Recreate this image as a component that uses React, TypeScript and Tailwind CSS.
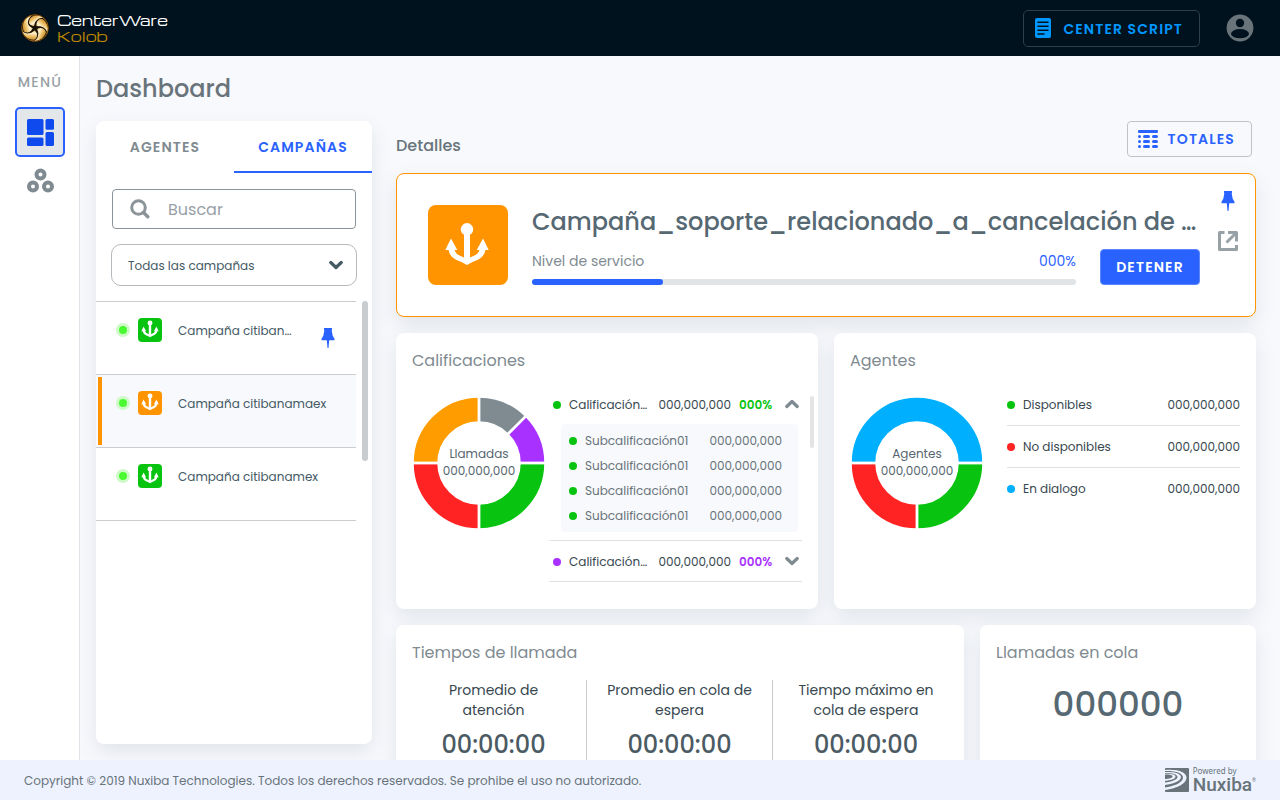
import React, { useState } from "react";

const card = "rounded-lg bg-white shadow-[0_8px_20px_rgba(69,90,100,0.13)]";

function BrandMark() {
  return (
    <svg viewBox="0 0 28 28" className="size-7 shrink-0" aria-hidden="true">
      <defs>
        <linearGradient id="gold" x1="0" y1="0" x2="1" y2="1">
          <stop offset="0" stopColor="#a8690f" />
          <stop offset="0.3" stopColor="#e9b95c" />
          <stop offset="0.5" stopColor="#fff3cf" />
          <stop offset="0.75" stopColor="#dc9f38" />
          <stop offset="1" stopColor="#8d5510" />
        </linearGradient>
      </defs>
      <circle cx="14" cy="14" r="13.6" fill="#170f06" />
      {[0, 72, 144, 216, 288].map((angle) => (
        <path
          key={angle}
          d="M13 12.500C8.500 12 5.500 8.500 7 4C10 1 18 -1 23 4C24.500 5.500 25.500 7 25.800 8.500C22 4.800 16.500 5 14.800 8C13.800 10 14 11.200 13 12.500Z"
          fill="url(#gold)"
          stroke="#170f06"
          strokeWidth="1"
          transform={`rotate(${angle} 14 14)`}
        />
      ))}
      <circle cx="14" cy="14" r="13.3" fill="none" stroke="#a8690f" strokeWidth="0.800" />
    </svg>
  );
}

function ScriptIcon() {
  return (
    <svg viewBox="0 0 16 20" className="h-5 w-4" aria-hidden="true">
      <rect width="16" height="20" rx="2" fill="#0098ff" />
      <path d="M3 4.300H13M3 8.300H13M3 12.300H13M3 16H9" stroke="#00121d" strokeWidth="1.600" strokeLinecap="round" />
    </svg>
  );
}

function AccountIcon() {
  return (
    <svg viewBox="0 0 28 28" className="size-7" aria-hidden="true">
      <circle cx="14" cy="14" r="13.4" fill="#68747a" />
      <circle cx="14" cy="9" r="4.2" fill="#00121d" />
      <ellipse cx="14" cy="19.700" rx="9" ry="4.600" fill="#00121d" />
    </svg>
  );
}

function DashboardIcon() {
  return (
    <svg viewBox="0 0 27 27" className="size-[27px]" fill="#0f4aef" aria-hidden="true">
      <rect width="16.500" height="16" rx="1.500" />
      <rect x="18.500" width="8.500" height="10.800" rx="1.500" />
      <rect x="18.500" y="13" width="8.500" height="14" rx="1.500" />
      <rect y="18.500" width="16.500" height="8.500" rx="1.500" />
    </svg>
  );
}

function GroupIcon() {
  return (
    <svg viewBox="0 0 27 25" className="h-[25px] w-[27px]" fill="none" stroke="#7f8b91" strokeWidth="4" aria-hidden="true">
      <circle cx="13.500" cy="6.500" r="4" />
      <circle cx="6" cy="18.500" r="4" />
      <circle cx="21" cy="18.500" r="4" />
    </svg>
  );
}

function TableIcon() {
  return (
    <svg viewBox="0 0 20 18" className="h-[18px] w-5" fill="#2962ff" aria-hidden="true">
      <rect width="20" height="3" rx="1" />
      {[5, 10, 15].map((y) => (
        <g key={y}>
          <rect y={y} width="3" height="3" rx="1.500" />
          <rect x="5" y={y} width="7" height="3" rx="1.500" />
          <rect x="14" y={y} width="6" height="3" rx="1.500" />
        </g>
      ))}
    </svg>
  );
}

function SearchIcon() {
  return (
    <svg viewBox="0 0 20 20" className="size-5 shrink-0" fill="none" stroke="#8b9498" aria-hidden="true">
      <circle cx="8.500" cy="8.500" r="6.800" strokeWidth="3" />
      <path d="M13.500 13.500L17.800 17.800" strokeWidth="3.400" strokeLinecap="round" />
    </svg>
  );
}

function Chevron({ up = false, className }: { up?: boolean; className: string }) {
  return (
    <svg viewBox="0 0 14 10" className={className} fill="none" stroke="currentColor" strokeWidth="3.200" aria-hidden="true">
      <path d={up ? "M1.800 7.500L7 2.500L12.200 7.500" : "M1.800 2.500L7 7.500L12.200 2.500"} strokeLinecap="round" strokeLinejoin="round" />
    </svg>
  );
}

function PinIcon() {
  return (
    <svg viewBox="0 0 14 20" className="h-5 w-3.5" fill="#2962ff" aria-hidden="true">
      <path d="M3 0H11V1.600L10.700 2.500L11.700 7.800L13.500 10.800V12.200H8.200L7.500 20H6.500L5.800 12.200H.5V10.800L2.300 7.800L3.300 2.500L3 1.600Z" />
    </svg>
  );
}

function OpenIcon() {
  return (
    <svg viewBox="0 0 20 20" className="size-5" fill="none" stroke="#98a1a6" strokeWidth="3" strokeLinejoin="round" aria-hidden="true">
      <path d="M6.500 1.500H1.500V18.500H18.500V14" />
      <path d="M10 1.500H18.500V10.500M18 2L8.500 11.500" />
    </svg>
  );
}

function Anchor({ large = false }: { large?: boolean }) {
  return (
    <svg viewBox={large ? "0 0 80 80" : "9 12 60 60"} className="size-full" fill="#fff" aria-hidden="true">
      <circle cx="39" cy="24.300" r="6.200" />
      <path d="M36 26H42V56H36Z" />
      <path d="M23 33.500L29.300 45H17.300Z" />
      <path d="M55 33.500L60.700 45H48.700Z" />
      <path d="M20.500 44C21 53 30 55.500 33.500 57L39 60L44.500 57C48 55.500 57 53 57.500 44H51.500C51 49.500 46 50.500 42 52.500H36C32 50.500 27 49.500 26.500 44Z" />
    </svg>
  );
}

function NuxibaMark() {
  return (
    <svg viewBox="0 0 24 24" className="size-6" aria-hidden="true">
      <rect width="24" height="24" rx="1" fill="#68747a" />
      <g fill="#eef2ff">
        <path d="M0 2C12 .5 21.500 4 21.500 9.500C21.500 17 8 21 0 22V19.500C8 18.500 18 15 18 9.500C18 4.500 9 2.500 0 3Z" />
        <path d="M0 4C9 3.500 16 5.500 16 9C16 13.500 7 16 0 17V14.500C6 13.800 12.500 12 12.500 9C12.500 6 6 4.800 0 5Z" />
        <path d="M0 5.800C6 5.500 10.500 6.500 10.500 8.500C10.500 11 5 12.500 0 12.800V11C4 10.800 7.500 10 7.500 8.500C7.500 7 4 6.500 0 6.600Z" />
      </g>
    </svg>
  );
}

type Slice = { from: number; to: number; color: string };

const polar = (deg: number, r: number) => {
  const a = ((deg - 90) * Math.PI) / 180;
  return `${66 + r * Math.cos(a)} ${66 + r * Math.sin(a)}`;
};

function Donut({ label, value, slices }: { label: string; value: string; slices: Slice[] }) {
  return (
    <div className="relative mt-[13px] ml-px grid size-[132px] shrink-0 place-items-center">
      <svg viewBox="0 0 132 132" className="absolute inset-0 size-full" fill="none" aria-hidden="true">
        {slices.map((s) => (
          <path
            key={s.from}
            d={`M${polar(s.from, 53.5)}A53.5 53.5 0 0 1 ${polar(s.to, 53.5)}`}
            stroke={s.color}
            strokeWidth="23.500"
          />
        ))}
        {slices.map((s) => (
          <path key={s.from} d={`M${polar(s.from, 40)}L${polar(s.from, 67)}`} stroke="#fff" strokeWidth="2.800" />
        ))}
      </svg>
      <p className="relative pb-0.5 text-center text-xs leading-[17px] text-[#56666f]">
        {label}
        <br />
        {value}
      </p>
    </div>
  );
}

const callSlices: Slice[] = [
  { from: 0, to: 45, color: "#7f8b91" },
  { from: 45, to: 90, color: "#a931ff" },
  { from: 90, to: 180, color: "#08c410" },
  { from: 180, to: 270, color: "#ff2323" },
  { from: 270, to: 360, color: "#ff9d00" },
];

const agentSlices: Slice[] = [
  { from: 90, to: 180, color: "#08c410" },
  { from: 180, to: 270, color: "#ff2323" },
  { from: 270, to: 450, color: "#00b0ff" },
];

const campaigns = [
  { name: "Campaña citiban…", tile: "bg-[#08c410]", pinned: true, active: false },
  { name: "Campaña citibanamaex", tile: "bg-[#ff9400]", pinned: false, active: true },
  { name: "Campaña citibanamex", tile: "bg-[#08c410]", pinned: false, active: false },
];

const agentStates = [
  { name: "Disponibles", dot: "bg-[#08c410]" },
  { name: "No disponibles", dot: "bg-[#ff2323]" },
  { name: "En dialogo", dot: "bg-[#00b0ff]" },
];

const times = ["Promedio de atención", "Promedio en cola de espera", "Tiempo máximo en cola de espera"];

function RatingRow({ open, dot, tone }: { open: boolean; dot: string; tone: string }) {
  return (
    <div className="flex h-10 items-center pt-0.5 pl-1 text-xs text-[#37474f]">
      <span className={`mr-2 size-2 shrink-0 rounded-full ${dot}`} />
      <span className="flex-1 whitespace-nowrap">Calificación…</span>
      <span>000,000,000</span>
      <span className={`ml-2 w-[35px] font-semibold ${tone}`}>000%</span>
      <button type="button" aria-label="Subcalificaciones" aria-expanded={open} className="mb-0.5 ml-2 grid size-5 place-items-center text-[#7f8b91]">
        <Chevron up={open} className="h-2.5 w-3.5" />
      </button>
    </div>
  );
}

function Sidebar() {
  return (
    <nav className="flex w-20 shrink-0 flex-col items-center border-r border-[#e0e3e7] bg-white pt-4 pl-px">
      <p className="text-sm leading-5 font-medium tracking-[0.09em] text-[#98a1a6]">MENÚ</p>
      <button type="button" aria-label="Dashboard" className="mt-[15px] grid size-[50px] place-items-center rounded-[5px] border-2 border-[#2962ff] bg-[#e4e7ea]">
        <DashboardIcon />
      </button>
      <button type="button" aria-label="Grupos" className="grid h-[46px] w-12 place-items-center">
        <GroupIcon />
      </button>
    </nav>
  );
}

function CampaignPanel() {
  const [query, setQuery] = useState("");
  return (
    <aside className={`mb-4 flex w-[276px] shrink-0 flex-col ${card}`}>
      <div role="tablist" className="grid grid-cols-2 text-sm font-semibold tracking-[0.08em]">
        <button type="button" role="tab" aria-selected="false" className="h-[52px] border-b-2 border-transparent pt-0.5 text-[#7f8b91]">
          AGENTES
        </button>
        <button type="button" role="tab" aria-selected="true" className="h-[52px] border-b-2 border-[#2962ff] pt-0.5 text-[#2962ff]">
          CAMPAÑAS
        </button>
      </div>
      <label className="mx-4 mt-4 flex h-10 items-center gap-[18px] rounded border border-[#8b9498] px-[17px]">
        <SearchIcon />
        <input
          type="text"
          aria-label="Buscar"
          placeholder="Buscar"
          value={query}
          onChange={(e) => setQuery(e.target.value)}
          className="min-w-0 flex-1 pt-0.5 text-base text-[#37474f] outline-none placeholder:text-[#98a1a6]"
        />
      </label>
      <div className="relative mx-[15px] my-[15px]">
        <select
          aria-label="Filtro de campañas"
          className="h-[42px] w-full appearance-none rounded-[10px] border border-[#b4babe] bg-white px-4 pt-0.5 text-xs text-[#455a64]"
        >
          <option>Todas las campañas</option>
        </select>
        <span className="pointer-events-none absolute inset-y-0 right-3.5 flex items-center text-[#455a64]">
          <Chevron className="h-2.5 w-3.5" />
        </span>
      </div>
      <div className="flex justify-between pr-1">
        <ul className="w-[260px] border-t border-[#c9cdd0]">
          {campaigns.map((c) => (
            <li
              key={c.name}
              className={`flex h-[73px] border-b border-[#c9cdd0] pr-[21px] ${c.active ? "bg-[#f8f9fd]" : ""}`}
            >
              <span className={`my-0.5 ml-0.5 w-1 ${c.active ? "bg-[#ff9400]" : ""}`} />
              <span className="mt-[21px] ml-3.5 grid size-3.5 place-items-center rounded-full bg-[#cdfac6]">
                <span className="size-2 rounded-full bg-[#49fa31]" />
              </span>
              <span className={`mt-4 ml-2 size-6 rounded-sm ${c.tile}`}>
                <Anchor />
              </span>
              <span className="mt-4 ml-4 flex-1 text-xs leading-[26px] whitespace-nowrap text-[#455a64]">{c.name}</span>
              {c.pinned && (
                <button type="button" aria-label="Quitar fijado" className="self-center">
                  <PinIcon />
                </button>
              )}
            </li>
          ))}
        </ul>
        <span className="h-40 w-1.5 rounded-full bg-[#c9cdd0]" />
      </div>
    </aside>
  );
}

function CampaignHeader() {
  return (
    <article className="flex gap-4 rounded-lg border border-[#ff9400] bg-white py-[15px] pr-[15px] pl-[31px] shadow-[0_8px_20px_rgba(69,90,100,0.13)]">
      <div className="my-4 flex min-w-0 flex-1 gap-6">
        <div className="size-20 shrink-0 rounded-lg bg-[#ff9400]">
          <Anchor large />
        </div>
        <div className="flex min-w-0 flex-1 flex-col justify-between">
          <h3 className="truncate text-2xl leading-[34px] font-medium text-[#566872]">
            Campaña_soporte_relacionado_a_cancelación de …
          </h3>
          <div className="flex gap-6">
            <div className="flex flex-1 flex-col justify-between">
              <div className="flex justify-between text-sm leading-6">
                <span className="text-[#7f8b91]">Nivel de servicio</span>
                <span className="text-[#2962ff]">000%</span>
              </div>
              <div className="h-1.5 rounded-full bg-[#e0e4e7]">
                <div className="h-1.5 w-[24%] rounded-full bg-[#2962ff]" />
              </div>
            </div>
            <button type="button" className="h-9 w-[100px] rounded border border-[#5b86ff] bg-[#2962ff] text-sm font-semibold tracking-[0.08em] text-white">
              DETENER
            </button>
          </div>
        </div>
      </div>
      <div className="flex w-6 shrink-0 flex-col gap-4">
        <button type="button" aria-label="Fijar" className="grid size-6 place-items-center">
          <PinIcon />
        </button>
        <button type="button" aria-label="Abrir en otra ventana" className="grid size-6 place-items-center">
          <OpenIcon />
        </button>
      </div>
    </article>
  );
}

function Ratings() {
  return (
    <article className={`h-[276px] min-w-0 py-4 pr-1 pl-4 ${card}`}>
      <h3 className="text-base leading-6 text-[#7f8b91]">Calificaciones</h3>
      <div className="mt-[11px] flex">
        <Donut label="Llamadas" value="000,000,000" slices={callSlices} />
        <div className="mr-2 ml-1 min-w-0 flex-1">
          <RatingRow open dot="bg-[#08c410]" tone="text-[#08c410]" />
          <ul className="mr-1 mb-2 ml-3 rounded bg-[#f8f9fd] py-1 pr-4 pl-2">
            {[0, 1, 2, 3].map((i) => (
              <li key={i} className="flex h-[25px] items-center text-xs text-[#68747a]">
                <span className="mr-2 size-2 rounded-full bg-[#08c410]" />
                <span className="flex-1">Subcalificación01</span>
                <span>000,000,000</span>
              </li>
            ))}
          </ul>
          <div className="border-y border-[#dfe1e3]">
            <RatingRow open={false} dot="bg-[#a931ff]" tone="text-[#a931ff]" />
          </div>
        </div>
        <span className="mt-3 h-[52px] w-1 rounded-full bg-[#e4e4e4]" />
      </div>
    </article>
  );
}

function Agents() {
  return (
    <article className={`h-[276px] min-w-0 p-4 ${card}`}>
      <h3 className="text-base leading-6 text-[#7f8b91]">Agentes</h3>
      <div className="mt-[11px] flex gap-6">
        <Donut label="Agentes" value="000,000,000" slices={agentSlices} />
        <ul className="flex-1 divide-y divide-[#dfe1e3]">
          {agentStates.map((s) => (
            <li key={s.name} className="flex h-[42px] items-center text-xs text-[#37474f]">
              <span className={`mr-2 size-2 rounded-full ${s.dot}`} />
              <span className="flex-1">{s.name}</span>
              <span>000,000,000</span>
            </li>
          ))}
        </ul>
      </div>
    </article>
  );
}

export default function App() {
  return (
    <div className="flex h-screen flex-col bg-[#f8f9fd] font-['Poppins','Inter',sans-serif]">
      <header className="flex h-14 shrink-0 items-center justify-between bg-[#00121d] pr-[26px] pl-[21px]">
        <div className="flex items-center gap-2 font-['Michroma','DejaVu_Sans',sans-serif]">
          <BrandMark />
          <div>
            <p className="text-sm leading-4 text-white">CenterWare</p>
            <p className="text-sm leading-4 text-[#bd8500]">Kolob</p>
          </div>
        </div>
        <div className="flex items-center gap-[26px]">
          <button type="button" className="flex h-[37px] items-center gap-3 rounded-[5px] border border-[#2f3e47] pr-4 pl-[11px] text-sm font-semibold tracking-[0.08em] text-[#0098ff]">
            <ScriptIcon />
            <span className="pt-0.5">CENTER SCRIPT</span>
          </button>
          <button type="button" aria-label="Cuenta">
            <AccountIcon />
          </button>
        </div>
      </header>

      <div className="flex min-h-0 flex-1">
        <Sidebar />
        <main className="flex min-w-0 flex-1 flex-col overflow-hidden pt-[17px] pr-6 pl-4">
          <h1 className="mb-4 text-2xl leading-8 font-medium text-[#68747a]">Dashboard</h1>
          <div className="flex min-h-0 flex-1 gap-6">
            <CampaignPanel />
            <section className="flex min-w-0 flex-1 flex-col gap-4">
              <div className="flex items-end justify-between pr-1">
                <h2 className="text-base leading-[22px] font-medium text-[#68747a]">Detalles</h2>
                <button type="button" className="flex h-9 items-center gap-2.5 rounded border border-[#bfc4c9] pr-4 pl-2.5 text-sm font-semibold tracking-[0.08em] text-[#2962ff]">
                  <TableIcon />
                  TOTALES
                </button>
              </div>
              <CampaignHeader />
              <div className="grid grid-cols-2 gap-4">
                <Ratings />
                <Agents />
              </div>
              <div className="flex gap-4">
                <article className={`flex-1 py-4 ${card}`}>
                  <h3 className="px-4 text-base leading-6 text-[#7f8b91]">Tiempos de llamada</h3>
                  <div className="mx-[5px] mt-[15px] grid grid-cols-3 divide-x divide-[#c9cdd0] text-center">
                    {times.map((t) => (
                      <div key={t} className="flex flex-col items-center pb-6">
                        <p className="w-[150px] text-sm leading-5 text-[#37474f]">{t}</p>
                        <p className="mt-2 text-2xl leading-[34px] font-medium text-[#4b5a63]">00:00:00</p>
                      </div>
                    ))}
                  </div>
                </article>
                <article className={`w-[276px] p-4 ${card}`}>
                  <h3 className="text-base leading-6 text-[#7f8b91]">Llamadas en cola</h3>
                  <p className="mt-4 text-center text-[34px] leading-[46px] font-medium text-[#566872]">000000</p>
                </article>
              </div>
            </section>
          </div>
        </main>
      </div>

      <footer className="flex h-10 shrink-0 items-center justify-between bg-[#eef2ff] px-6 text-[#68747a]">
        <p className="pt-0.5 text-xs">
          Copyright © 2019 Nuxiba Technologies. Todos los derechos reservados. Se prohibe el uso no autorizado.
        </p>
        <div className="flex items-center gap-1">
          <NuxibaMark />
          <div className="font-['Roboto',sans-serif]">
            <p className="font-['Noto_Sans',sans-serif] text-[8px] leading-[10px]">Powered by</p>
            <p className="flex text-[19px] leading-[18px] font-medium">
              Nuxiba<span className="text-[5px] leading-2 font-normal">®</span>
            </p>
          </div>
        </div>
      </footer>
    </div>
  );
}
